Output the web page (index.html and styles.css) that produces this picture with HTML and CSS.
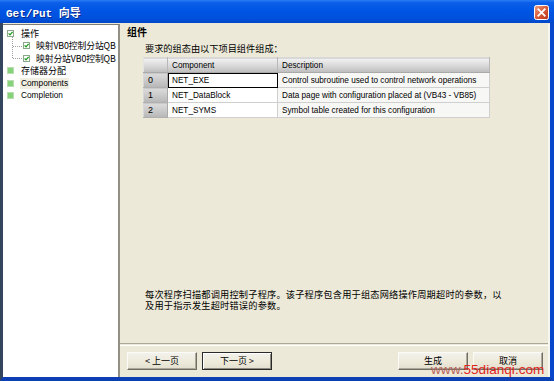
FILE: index.html
```html
<!DOCTYPE html>
<html lang="zh">
<head>
<meta charset="utf-8">
<title>Get/Put 向导</title>
<link rel="stylesheet" href="styles.css">
</head>
<body>
<div class="window">
  <div class="titlebar">
    <span class="title">Get/Put 向导</span>
    <span class="close">
      <svg width="15" height="15" viewBox="0 0 15 15">
        <defs>
          <linearGradient id="cg" x1="0" y1="0" x2="1" y2="1">
            <stop offset="0" stop-color="#f0a58a"/>
            <stop offset="0.45" stop-color="#dd5f3d"/>
            <stop offset="1" stop-color="#b8341a"/>
          </linearGradient>
        </defs>
        <rect x="0.5" y="0.5" width="14" height="14" rx="2" fill="url(#cg)" stroke="#fff"/>
        <path d="M4.3 4.3 L10.7 10.7 M10.7 4.3 L4.3 10.7" stroke="#fff" stroke-width="1.8" stroke-linecap="square"/>
      </svg>
    </span>
  </div>
  <div class="client">
    <nav class="tree">
      <div class="row"><span class="box done"><svg width="7" height="7" viewBox="0 0 7 7"><rect x="0.5" y="0.5" width="6" height="6" fill="#fff" stroke="#8aa88a"/><path d="M1.6 3.4 L3 4.9 L5.6 1.9" fill="none" stroke="#1f9a1f" stroke-width="1.3"/></svg></span><span class="label">操作</span></div>
      <div class="children">
        <div class="row sub"><span class="box done"><svg width="7" height="7" viewBox="0 0 7 7"><rect x="0.5" y="0.5" width="6" height="6" fill="#fff" stroke="#8aa88a"/><path d="M1.6 3.4 L3 4.9 L5.6 1.9" fill="none" stroke="#1f9a1f" stroke-width="1.3"/></svg></span><span class="label">映射VB0控制分站QB</span></div>
        <div class="row sub last"><span class="box done"><svg width="7" height="7" viewBox="0 0 7 7"><rect x="0.5" y="0.5" width="6" height="6" fill="#fff" stroke="#8aa88a"/><path d="M1.6 3.4 L3 4.9 L5.6 1.9" fill="none" stroke="#1f9a1f" stroke-width="1.3"/></svg></span><span class="label">映射分站VB0控制QB</span></div>
      </div>
      <div class="row"><span class="box"><svg width="7" height="7" viewBox="0 0 7 7"><rect x="0.5" y="0.5" width="6" height="6" fill="#86d27a" stroke="#b9ddb0"/></svg></span><span class="label">存储器分配</span></div>
      <div class="row current"><span class="box"><svg width="7" height="7" viewBox="0 0 7 7"><rect x="0.5" y="0.5" width="6" height="6" fill="#86d27a" stroke="#b9ddb0"/></svg></span><span class="label en">Components</span></div>
      <div class="row"><span class="box"><svg width="7" height="7" viewBox="0 0 7 7"><rect x="0.5" y="0.5" width="6" height="6" fill="#86d27a" stroke="#b9ddb0"/></svg></span><span class="label en">Completion</span></div>
    </nav>
    <main class="page">
      <div class="heading">组件</div>
      <div class="intro">要求的组态由以下项目组件组成：</div>
      <table class="grid">
        <colgroup>
          <col class="c-idx">
          <col class="c-comp">
          <col class="c-desc">
        </colgroup>
        <thead>
          <tr><th class="idx"></th><th class="comp">Component</th><th class="desc">Description</th></tr>
        </thead>
        <tbody>
          <tr><td class="idx">0</td><td class="comp focus">NET_EXE</td><td class="desc">Control subroutine used to control network operations</td></tr>
          <tr><td class="idx">1</td><td class="comp">NET_DataBlock</td><td class="desc">Data page with configuration placed at (VB43 - VB85)</td></tr>
          <tr><td class="idx">2</td><td class="comp">NET_SYMS</td><td class="desc">Symbol table created for this configuration</td></tr>
        </tbody>
      </table>
      <p class="note">每次程序扫描都调用控制子程序。该子程序包含用于组态网络操作周期超时的参数，以<br>及用于指示发生超时错误的参数。</p>
      <div class="sep"></div>
      <div class="buttons">
        <button class="btn">&lt; 上一页</button>
        <button class="btn default">下一页 &gt;</button>
        <span class="spacer"></span>
        <button class="btn">生成</button>
        <button class="btn">取消</button>
      </div>
    </main>
  </div>
  <div class="watermark"><span class="www">www.</span>55dianqi.com</div>
</div>
</body>
</html>
```
FILE: styles.css
```css
html, body {
  margin: 0;
  padding: 0;
  width: 554px;
  height: 381px;
  overflow: hidden;
  background: #ece9d8;
}

.window {
  position: relative;
  width: 554px;
  height: 381px;
  display: flex;
  flex-direction: column;
  font-family: "Noto Sans CJK SC", "Liberation Sans", sans-serif;
  color: #000;
}

.titlebar {
  height: 23px;
  flex: none;
  display: flex;
  align-items: center;
  justify-content: space-between;
  padding: 0 5px 0 6px;
  background: linear-gradient(to bottom, #2a7cf4 0%, #0b5fe8 12%, #0055e5 45%, #0051dc 80%, #0046c8 100%);
}

.title {
  font-family: "Liberation Mono", "Noto Sans CJK SC", monospace;
  font-weight: bold;
  font-size: 11px;
  color: #fff;
  text-shadow: 1px 1px 0 #0a2a8a;
  padding-top: 1px;
}

.close {
  display: flex;
  width: 15px;
  height: 15px;
  margin-top: 2px;
}

.client {
  flex: 1;
  display: flex;
  min-height: 0;
  padding-top: 1px;
  background: #ece9d8;
  border-left: 3px solid #34465e;
  border-right: 4px solid #0846cc;
  border-bottom: 4px solid #0c3fb4;
}

/* ---------- tree ---------- */
.tree {
  width: 115px;
  flex: none;
  background: #fff;
  border-top: 1px solid #7d7d75;
  border-right: 2px solid #918f86;
  padding-top: 2px;
  font-size: 9px;
}

.row {
  display: flex;
  align-items: center;
  height: 12.5px;
  padding-left: 4px;
  white-space: nowrap;
  position: relative;
}

.row .box {
  display: flex;
  width: 7px;
  height: 7px;
  flex: none;
}

.row .label {
  margin-left: 6px;
  line-height: 11px;
  padding: 0 1px;
}

.row .label.en {
  font-family: "Liberation Sans", sans-serif;
  font-size: 8.3px;
}

.row.current .label {
  background: #f1eee2;
}

.children {
  position: relative;
}

.row.sub {
  padding-left: 20px;
}

.row.sub .label {
  margin-left: 5px;
  font-size: 8.8px;
  letter-spacing: -0.1px;
}

.row.sub::before {
  content: "";
  position: absolute;
  left: 9px;
  top: -3px;
  height: calc(100% + 3px);
  border-left: 1px dotted #a0a0a0;
}

.row.sub.last::before {
  height: calc(50% + 3px);
}

.row.sub::after {
  content: "";
  position: absolute;
  left: 10px;
  top: 50%;
  width: 9px;
  border-top: 1px dotted #a0a0a0;
}

/* ---------- main page ---------- */
.page {
  flex: 1;
  display: flex;
  flex-direction: column;
  min-width: 0;
  border-right: 2px solid #f6f5ef;
  padding-bottom: 7px;
}

.heading {
  margin: 2px 0 0 7px;
  font-weight: bold;
  font-size: 10px;
  line-height: 11px;
}

.intro {
  margin: 6px 0 0 25px;
  font-size: 9.2px;
  line-height: 10px;
  white-space: nowrap;
}

.grid {
  margin: 4px 0 0 23px;
  width: 346px;
  border-collapse: collapse;
  table-layout: fixed;
  font-family: "Liberation Sans", sans-serif;
  font-size: 8.2px;
  border: 1px solid #b4b4b4;
}

.c-idx { width: 24px; }
.c-comp { width: 110px; }
.c-desc { width: 212px; }

.grid th,
.grid td {
  box-sizing: border-box;
  padding: 0 0 0 4px;
  text-align: left;
  font-weight: normal;
  white-space: nowrap;
  overflow: hidden;
  border: 1px solid #cfcfcf;
}

.grid th {
  height: 15px;
  background: linear-gradient(to bottom, #f2f2f2 0%, #dadada 50%, #bdbdbd 100%);
  border-color: #d8d8d8 #b8b8b8 #a9a9a9 #e4e4e4;
}

.grid td {
  height: 15px;
}

.grid td.idx {
  background: linear-gradient(to bottom, #dcdcdc 0%, #c6c6c6 60%, #b6b6b6 100%);
  border-color: #c2c2c2 #a9a9a9 #b0b0b0 #d8d8d8;
  font-size: 9px;
}

.grid td.comp {
  background: #fff;
}

.grid td.desc {
  background: #f7f7f5;
}

.grid td.focus {
  outline: 1px solid #000;
  outline-offset: -1px;
}

.note {
  margin: auto 0 33px 25px;
  font-size: 9.2px;
  line-height: 10.5px;
  white-space: nowrap;
  letter-spacing: 0.2px;
}

.sep {
  height: 1px;
  border-top: 1px solid #aca899;
  border-bottom: 1px solid #fff;
  flex: none;
}

.buttons {
  display: flex;
  align-items: center;
  margin-top: 6px;
  padding: 0 5px 0 7px;
  gap: 5px;
}

.spacer {
  flex: 1;
}

.btn {
  width: 70px;
  height: 18px;
  margin: 0;
  padding: 0;
  font-family: "Noto Sans CJK SC", "Liberation Sans", sans-serif;
  font-size: 9px;
  line-height: 14px;
  color: #000;
  background: linear-gradient(to bottom, #f3f2ec 0%, #ece9d8 60%, #e2dfd0 100%);
  border: 1px solid;
  border-color: #fbfaf6 #6f6d64 #6f6d64 #fbfaf6;
  box-shadow: inset -1px -1px 0 #aca899;
}

.btn.default {
  border-color: #2a2a2a;
  box-shadow: inset 1px 1px 0 #fff, inset -1px -1px 0 #8d8b80;
}

.watermark {
  position: absolute;
  left: 431px;
  top: 363px;
  font-family: "Liberation Sans", sans-serif;
  font-size: 13.6px;
  line-height: 14px;
  color: #e0261c;
  white-space: nowrap;
}

.watermark .www {
  color: #b8635a;
}
```
